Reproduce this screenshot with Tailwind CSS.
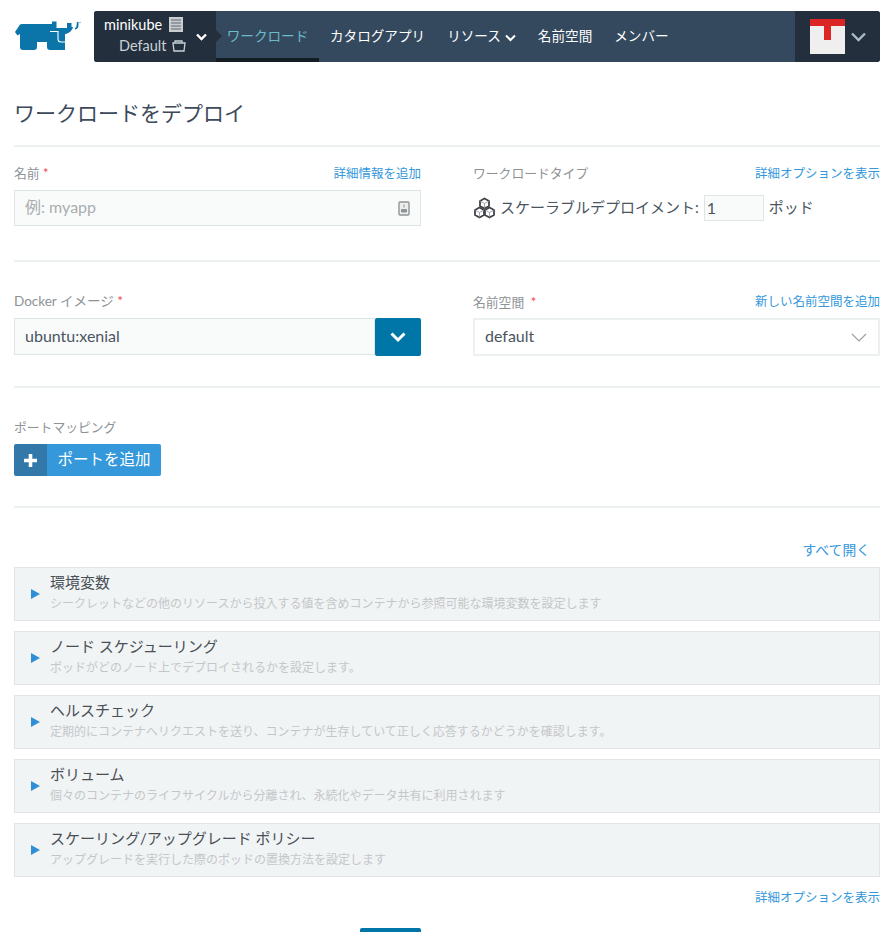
<!DOCTYPE html>
<html lang="ja">
<head>
  <meta charset="UTF-8">
  <title>ワークロードをデプロイ</title>
  <script src="https://cdn.jsdelivr.net/npm/@tailwindcss/browser@4"></script>
</head>
<body class="bg-white h-[932px] overflow-hidden font-['Lato','Noto_Sans_CJK_JP',sans-serif] text-[#4f5b66]">
  <div class="pl-[14px] pr-[7px]">

    <!-- ヘッダー -->
    <header class="flex items-stretch h-[51px] mt-[11px]">
      <div class="w-[80px] shrink-0 pt-[9px]">
        <svg width="67" height="31" viewBox="0 0 67 31">
          <path fill="#0b75aa" d="M1 12 L6 4.5 Q6.5 4 8 4 H38 V1.5 H42.5 V8 H53 V3 H57.5 V7 H59 Q58 12 52 14 H51 V30 H36 Q33 30 33 27 V22 H23 V27 Q23 30 20 30 H9 Q6 30 6 27 V14 L3.5 15.5 Z"/>
          <path fill="none" stroke="#fff" stroke-width="1.1" d="M36 11.5 H44 V19 Q44 22 47 22 H51.5"/>
          <path fill="#0b75aa" d="M61 8 Q63 7.5 62.8 2 H64.5 V5 Q64.5 9 61 9.5 Z"/>
          <circle cx="66" cy="2.5" r="0.8" fill="#7fb5d0"/>
        </svg>
      </div>
      <nav class="flex-1 flex items-stretch bg-[#34495e] rounded-[3px] overflow-hidden text-white text-[13.6px]">
        <div class="w-[122px] shrink-0 bg-[#232f3c] flex items-center relative">
          <div class="pl-[10px] text-[14.5px] leading-[21px] -mt-[3px]">
            <div class="flex items-center gap-[7px]">
              <span>minikube</span>
              <svg width="14" height="15" viewBox="0 0 14 15"><rect x="0" y="0" width="14" height="15" fill="#c9cdd0"/><path d="M2 3h10M2 6h10M2 9h10M2 12h10" stroke="#5c6670" stroke-width="1"/></svg>
            </div>
            <div class="flex items-center gap-[6px] pl-[15px] text-[#c9d2d8]">
              <span>Default</span>
              <svg width="14" height="12" viewBox="0 0 14 12" fill="none" stroke="#c9d2d8" stroke-width="1.3"><path d="M3 2.5 V1 H10 V2.5"/><path d="M1 3 H13 L12 11 H2 Z"/></svg>
            </div>
          </div>
          <svg class="absolute left-[102px] top-[22px]" width="11" height="8" viewBox="0 0 11 8" fill="none" stroke="#fff" stroke-width="2.4"><path d="M1 1.5 L5.5 6 L10 1.5"/></svg>
        </div>
        <a class="w-[103px] shrink-0 relative flex justify-center pt-[13px] text-[#6bbcc8] border-b-[4px] border-[#141c24] leading-[24px]">ワークロード
          <span class="absolute left-0 top-[19px] border-y-[6px] border-y-transparent border-l-[6px] border-l-[#232f3c]"></span>
        </a>
        <a class="ml-[11px] pt-[13px] leading-[24px]">カタログアプリ</a>
        <a class="ml-[22px] pt-[13px] leading-[24px] flex items-start gap-[4px]">リソース
          <svg class="mt-[10px]" width="11" height="8" viewBox="0 0 11 8" fill="none" stroke="#fff" stroke-width="2"><path d="M1 1.5 L5.5 6 L10 1.5"/></svg>
        </a>
        <a class="ml-[22px] pt-[13px] leading-[24px]">名前空間</a>
        <a class="ml-[22px] pt-[13px] leading-[24px]">メンバー</a>
        <div class="ml-auto w-[85px] shrink-0 bg-[#232f3c] flex items-center pl-[15px] gap-[6px]">
          <div class="w-[35px] h-[35px] bg-[#efefef] relative">
            <div class="h-[7px] bg-[#dc2626]"></div>
            <div class="absolute left-[14px] top-[7px] w-[7px] h-[14px] bg-[#dc2626]"></div>
          </div>
          <svg width="15" height="10" viewBox="0 0 15 10" fill="none" stroke="#a9bcc8" stroke-width="2.4"><path d="M1 1.5 L7.5 8 L14 1.5"/></svg>
        </div>
      </nav>
    </header>

    <!-- タイトル -->
    <h1 class="mt-[36px] text-[21px] leading-[30px] text-[#3d4a5c] font-normal">ワークロードをデプロイ</h1>
    <hr class="mt-[17px] border-t-2 border-[#edf0f0]">

    <!-- 名前 / タイプ -->
    <div class="grid grid-cols-[407px_407px] justify-between pt-[17px] h-[113px]">
      <div>
        <div class="flex justify-between items-center h-[20px] text-[12.8px] leading-[20px]">
          <span class="text-[#8d9296] -mt-[2px]">名前 <span class="text-[#ef4444]">*</span></span>
          <a class="text-[12.5px] text-[#3498db]">詳細情報を追加</a>
        </div>
        <div class="mt-[6px] h-[36px] border border-[#dfe5e5] bg-[#f9fbfb] flex items-center justify-between pl-[10px] pr-[10px] text-[16px] text-[#a9adaf]">
          <span class="-mt-[2px]">例: myapp</span>
          <svg width="12" height="15" viewBox="0 0 12 15"><rect x="1" y="1" width="10" height="13" rx="1" fill="#eceeee" stroke="#8f9496" stroke-width="1.4"/><path d="M6 3.5v3M3.5 11 h5 v-2.5 h-5z" fill="#8f9496" stroke="#8f9496"/></svg>
        </div>
      </div>
      <div>
        <div class="flex justify-between items-center h-[20px] text-[12.8px] leading-[20px]">
          <span class="text-[#8d9296] -mt-[2px]">ワークロードタイプ</span>
          <a class="text-[12.5px] text-[#3498db]">詳細オプションを表示</a>
        </div>
        <div class="mt-[10px] h-[28px] flex items-center text-[15px] text-[#4a5560]">
          <svg width="23" height="22" viewBox="0 0 23 22" fill="none" stroke="#3f4348" stroke-width="1.8" stroke-linejoin="round"><path d="M11.5 1.5 L16 4 V9 L11.5 11.5 L7 9 V4 Z"/><path d="M6.5 10.5 L11 13 V18 L6.5 20.5 L2 18 V13 Z"/><path d="M16.5 10.5 L21 13 V18 L16.5 20.5 L12 18 V13 Z"/><path stroke="#8b8f96" stroke-width="0.8" d="M7 4 L11.5 6.5 L16 4 M11.5 6.5 V11.5 M2 13 L6.5 15.5 L11 13 M6.5 15.5 V20.5 M12 13 L16.5 15.5 L21 13 M16.5 15.5 V20.5"/></svg>
          <span class="ml-[4px] -mt-[2px]">スケーラブルデプロイメント:</span>
          <span class="ml-[5px] w-[60px] h-[26px] border border-[#dfe5e5] bg-[#f9fbfb] pl-[2px] leading-[24px] text-[16px]">1</span>
          <span class="ml-[5px] -mt-[2px]">ポッド</span>
        </div>
      </div>
    </div>
    <hr class="border-t-2 border-[#edf0f0]">

    <!-- イメージ / 名前空間 -->
    <div class="grid grid-cols-[407px_407px] justify-between pt-[29px] h-[124px]">
      <div>
        <div class="h-[20px] text-[13.5px] leading-[20px] text-[#8d9296]">Docker イメージ <span class="text-[#ef4444]">*</span></div>
        <div class="mt-[7px] flex h-[38px]">
          <div class="flex-1 h-[37px] border border-[#dfe5e5] bg-[#f9fbfb] pl-[10px] text-[16px] leading-[33px] text-[#4a5560]">ubuntu:xenial</div>
          <div class="w-[46px] bg-[#0075a8] rounded-[2px] flex items-center justify-center">
            <svg width="16" height="11" viewBox="0 0 16 11" fill="none" stroke="#fff" stroke-width="3"><path d="M1.5 1.5 L8 8 L14.5 1.5"/></svg>
          </div>
        </div>
      </div>
      <div>
        <div class="flex justify-between items-center h-[20px] text-[12.8px] leading-[20px] pt-[1px]">
          <span class="text-[#8d9296]">名前空間 &nbsp;<span class="text-[#ef4444]">*</span></span>
          <a class="text-[12.5px] text-[#3498db]">新しい名前空間を追加</a>
        </div>
        <div class="mt-[7px] h-[38px] border-2 border-[#edf0f0] flex items-center justify-between pl-[10px] pr-[11px] text-[16px] text-[#4a5560]">
          <span class="-mt-[2px]">default</span>
          <svg width="16" height="9" viewBox="0 0 16 9" fill="none" stroke="#9aa0a4" stroke-width="1.2"><path d="M1 1 L8 8 L15 1"/></svg>
        </div>
      </div>
    </div>
    <hr class="border-t-2 border-[#edf0f0]">

    <!-- ポート -->
    <div class="pt-[29px] h-[118px]">
      <div class="h-[20px] text-[12.8px] leading-[20px] text-[#8d9296]">ポートマッピング</div>
      <div class="mt-[7px] inline-flex h-[32px] rounded-[2px] overflow-hidden text-white text-[15.5px]">
        <span class="w-[33px] bg-[#3278a8] flex items-center justify-center">
          <svg width="13" height="13" viewBox="0 0 13 13"><path fill="#fff" d="M4.7 0h3.6v4.7H13v3.6H8.3V13H4.7V8.3H0V4.7h4.7z"/></svg>
        </span>
        <span class="w-[114px] bg-[#3498db] flex items-center justify-center pb-[1px]">ポートを追加</span>
      </div>
    </div>
    <hr class="border-t-2 border-[#edf0f0]">

    <!-- アコーディオン -->
    <div class="pt-[32px] pr-[10px] h-[20px] box-content text-right text-[13.8px] leading-[20px] text-[#3498db]">すべて開く</div>
    <div class="mt-[7px] flex flex-col gap-[10px]">
      <div class="h-[54px] border border-[#dfe5e5] bg-[#f1f4f5] flex items-start pl-[16px] pt-[4px]">
        <span class="self-center border-y-[5px] border-y-transparent border-l-[9px] border-l-[#2d8fd5] mb-[5px]"></span>
        <div class="ml-[10px]">
          <div class="text-[15px] leading-[20px] text-[#4a4f55]">環境変数</div>
          <div class="mt-[2px] text-[12px] leading-[20px] text-[#c4c7c9]">シークレットなどの他のリソースから投入する値を含めコンテナから参照可能な環境変数を設定します</div>
        </div>
      </div>
      <div class="h-[54px] border border-[#dfe5e5] bg-[#f1f4f5] flex items-start pl-[16px] pt-[4px]">
        <span class="self-center border-y-[5px] border-y-transparent border-l-[9px] border-l-[#2d8fd5] mb-[5px]"></span>
        <div class="ml-[10px]">
          <div class="text-[15px] leading-[20px] text-[#4a4f55]">ノード スケジューリング</div>
          <div class="mt-[2px] text-[12px] leading-[20px] text-[#c4c7c9]">ポッドがどのノード上でデプロイされるかを設定します。</div>
        </div>
      </div>
      <div class="h-[54px] border border-[#dfe5e5] bg-[#f1f4f5] flex items-start pl-[16px] pt-[4px]">
        <span class="self-center border-y-[5px] border-y-transparent border-l-[9px] border-l-[#2d8fd5] mb-[5px]"></span>
        <div class="ml-[10px]">
          <div class="text-[15px] leading-[20px] text-[#4a4f55]">ヘルスチェック</div>
          <div class="mt-[2px] text-[12px] leading-[20px] text-[#c4c7c9]">定期的にコンテナへリクエストを送り、コンテナが生存していて正しく応答するかどうかを確認します。</div>
        </div>
      </div>
      <div class="h-[54px] border border-[#dfe5e5] bg-[#f1f4f5] flex items-start pl-[16px] pt-[4px]">
        <span class="self-center border-y-[5px] border-y-transparent border-l-[9px] border-l-[#2d8fd5] mb-[5px]"></span>
        <div class="ml-[10px]">
          <div class="text-[15px] leading-[20px] text-[#4a4f55]">ボリューム</div>
          <div class="mt-[2px] text-[12px] leading-[20px] text-[#c4c7c9]">個々のコンテナのライフサイクルから分離され、永続化やデータ共有に利用されます</div>
        </div>
      </div>
      <div class="h-[54px] border border-[#dfe5e5] bg-[#f1f4f5] flex items-start pl-[16px] pt-[4px]">
        <span class="self-center border-y-[5px] border-y-transparent border-l-[9px] border-l-[#2d8fd5] mb-[5px]"></span>
        <div class="ml-[10px]">
          <div class="text-[15px] leading-[20px] text-[#4a4f55]">スケーリング/アップグレード ポリシー</div>
          <div class="mt-[2px] text-[12px] leading-[20px] text-[#c4c7c9]">アップグレードを実行した際のポッドの置換方法を設定します</div>
        </div>
      </div>
    </div>
    <div class="mt-[11px] text-right text-[12.5px] leading-[20px] text-[#3498db]">詳細オプションを表示</div>
    <div class="mt-[20px] ml-[346px] w-[61px] h-[10px] bg-[#0075a8] rounded-t-[2px]"></div>
  </div>
</body>
</html>
